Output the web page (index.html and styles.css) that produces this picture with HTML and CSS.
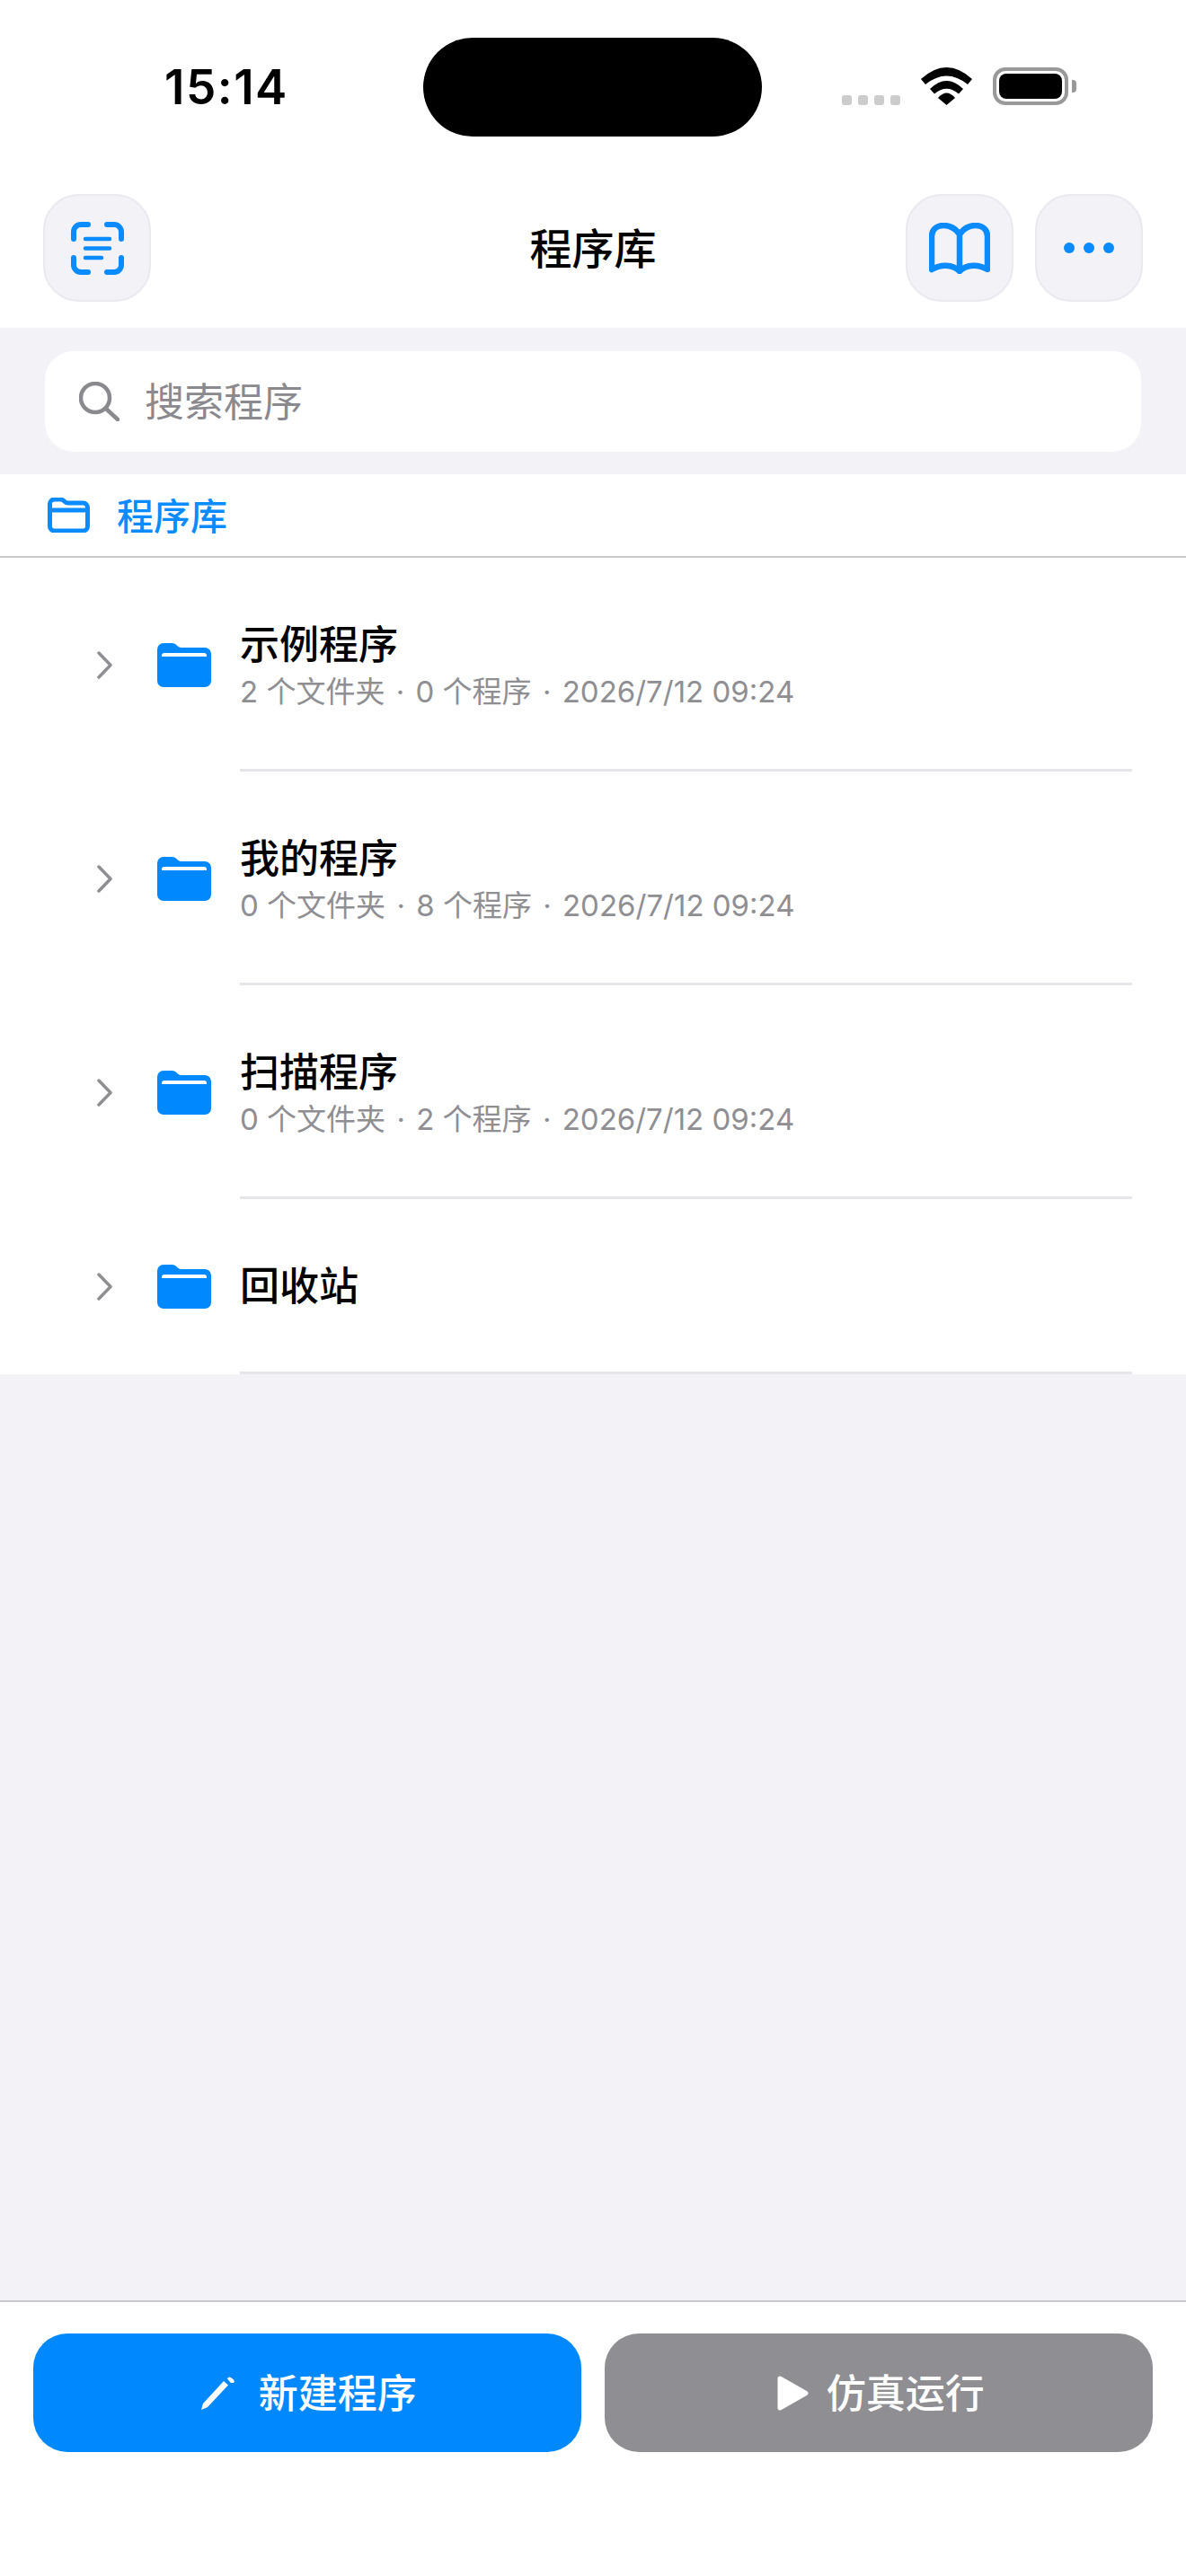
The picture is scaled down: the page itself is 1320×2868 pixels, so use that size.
FILE: index.html
```html
<!DOCTYPE html>
<html lang="zh-CN">
<head>
    <meta charset="UTF-8">
    <meta name="viewport" content="width=device-width, initial-scale=1.0">
    <title>程序库</title>
    <link rel="stylesheet" href="styles.css">
</head>
<body>
    <div class="status">
        <div class="status-left"><span class="time">15:14</span></div>
        <div class="island"></div>
        <div class="status-right">
            <div class="signal"><i></i><i></i><i></i><i></i></div>
            <svg class="wifi" viewBox="0 0 57 42"><path d="M0 13Q28.5-13 57 13L52 19Q28.5 0 5 19Z"/><path d="M10 24Q28.5 6 47 24L42 29.5Q28.5 18 15 29.5Z"/><path d="M19 34Q28.5 23 38 34L28.5 42Z"/></svg>
            <div class="battery"><div class="battery-fill"></div></div>
            <div class="battery-cap"></div>
        </div>
    </div>

    <div class="header">
        <div class="icon-btn">
            <svg class="scan" viewBox="0 0 59 59"><path d="M3 19V11a8 8 0 0 1 8-8h8M40 3h8a8 8 0 0 1 8 8v8M56 40v8a8 8 0 0 1-8 8h-8M19 56h-8a8 8 0 0 1-8-8v-8"/><path class="thin" d="M16 19H43M16 29.500H43M16 40H34"/></svg>
        </div>
        <div class="title">程序库</div>
        <div class="header-right">
            <div class="icon-btn">
                <svg class="book" viewBox="0 0 68 57"><path d="M3 52V15C3 8 8 3 16 3C24 3 30 7 34 13C38 7 44 3 52 3C60 3 65 8 65 15V52C55 46 42 46 34 54C26 46 13 46 3 52ZM34 13V54"/></svg>
            </div>
            <div class="icon-btn">
                <div class="dots"><i></i><i></i><i></i></div>
            </div>
        </div>
    </div>

    <div class="search-band">
        <div class="search">
            <svg class="search-icon" viewBox="0 0 45 44"><circle cx="18" cy="18" r="16"/><path d="M30 30L43 42"/></svg>
            <span>搜索程序</span>
        </div>
    </div>

    <div class="crumb">
        <svg class="crumb-folder" viewBox="0 0 47 39"><path d="M2.500 7a5 5 0 0 1 5-5h7c4 0 4 4 8 4h17a5 5 0 0 1 5 5v21a5 5 0 0 1-5 5H7.500a5 5 0 0 1-5-5Z"/><path d="M2.500 14H44.500"/></svg>
        <span>程序库</span>
    </div>

    <div class="list">
        <div class="row">
            <svg class="chevron" viewBox="0 0 17 31"><path d="M2 2L15 15.500L2 29"/></svg>
            <svg class="folder" viewBox="0 0 60 49"><path d="M0 7a7 7 0 0 1 7-7h9c6 0 6 5 11 5h26a7 7 0 0 1 7 7v30a7 7 0 0 1-7 7H7a7 7 0 0 1-7-7Z"/><path class="bar" d="M5 14a3 3 0 0 1 3-3h44a3 3 0 0 1 3 3v1H5Z"/></svg>
            <div class="row-body">
                <div class="name">示例程序</div>
                <div class="meta">2 个文件夹 <span class="sep">·</span> 0 个程序 <span class="sep">·</span> 2026/7/12 09:24</div>
            </div>
        </div>
        <div class="row">
            <svg class="chevron" viewBox="0 0 17 31"><path d="M2 2L15 15.500L2 29"/></svg>
            <svg class="folder" viewBox="0 0 60 49"><path d="M0 7a7 7 0 0 1 7-7h9c6 0 6 5 11 5h26a7 7 0 0 1 7 7v30a7 7 0 0 1-7 7H7a7 7 0 0 1-7-7Z"/><path class="bar" d="M5 14a3 3 0 0 1 3-3h44a3 3 0 0 1 3 3v1H5Z"/></svg>
            <div class="row-body">
                <div class="name">我的程序</div>
                <div class="meta">0 个文件夹 <span class="sep">·</span> 8 个程序 <span class="sep">·</span> 2026/7/12 09:24</div>
            </div>
        </div>
        <div class="row">
            <svg class="chevron" viewBox="0 0 17 31"><path d="M2 2L15 15.500L2 29"/></svg>
            <svg class="folder" viewBox="0 0 60 49"><path d="M0 7a7 7 0 0 1 7-7h9c6 0 6 5 11 5h26a7 7 0 0 1 7 7v30a7 7 0 0 1-7 7H7a7 7 0 0 1-7-7Z"/><path class="bar" d="M5 14a3 3 0 0 1 3-3h44a3 3 0 0 1 3 3v1H5Z"/></svg>
            <div class="row-body">
                <div class="name">扫描程序</div>
                <div class="meta">0 个文件夹 <span class="sep">·</span> 2 个程序 <span class="sep">·</span> 2026/7/12 09:24</div>
            </div>
        </div>
        <div class="row row-short">
            <svg class="chevron" viewBox="0 0 17 31"><path d="M2 2L15 15.500L2 29"/></svg>
            <svg class="folder" viewBox="0 0 60 49"><path d="M0 7a7 7 0 0 1 7-7h9c6 0 6 5 11 5h26a7 7 0 0 1 7 7v30a7 7 0 0 1-7 7H7a7 7 0 0 1-7-7Z"/><path class="bar" d="M5 14a3 3 0 0 1 3-3h44a3 3 0 0 1 3 3v1H5Z"/></svg>
            <div class="row-body">
                <div class="name">回收站</div>
            </div>
        </div>
    </div>

    <div class="spacer"></div>

    <div class="footer">
        <div class="action action-blue">
            <svg class="pencil" viewBox="0 0 38 38"><path d="M0 38L2 31L25 6L30 10.500L7 35Z"/><path d="M29 3.500a3 3 0 0 1 4-1.500l3 2.500a3 3 0 0 1 0 3.500L33 8Z"/></svg>
            <span>新建程序</span>
        </div>
        <div class="action action-gray">
            <svg class="play" viewBox="0 0 35 39"><path d="M3 3L32 19.500L3 36Z"/></svg>
            <span>仿真运行</span>
        </div>
    </div>
</body>
</html>
```

FILE: styles.css
```css
* {
    box-sizing: border-box;
}
body {
    margin: 0;
    height: 2868px;
    overflow: hidden;
    display: flex;
    flex-direction: column;
    background-color: #f2f2f7;
    font-family: "Noto Sans CJK SC", "Inter", sans-serif;
    color: #000;
}

/* status bar */
.status {
    height: 192px;
    background-color: #fff;
    display: flex;
    padding-top: 42px;
}
.status-left {
    width: 471px;
    padding-left: 183px;
    height: 110px;
    display: flex;
    align-items: center;
}
.time {
    font-family: "Inter", sans-serif;
    font-size: 53px;
    font-weight: 600;
    letter-spacing: 1.500px;
}
.island {
    width: 377px;
    height: 110px;
    background-color: #000;
    border-radius: 55px;
}
.status-right {
    display: flex;
    align-items: flex-end;
    height: 75px;
    padding-left: 89px;
}
.signal {
    display: flex;
    gap: 7px;
    margin-right: 23px;
}
.signal i {
    width: 11px;
    height: 11px;
    border-radius: 3px;
    background-color: #ccc;
}
.wifi {
    width: 57px;
    height: 42px;
    margin-right: 23px;
}
.battery {
    width: 84px;
    height: 42px;
    border: 4px solid #999;
    border-radius: 14px;
    padding: 3px;
}
.battery-fill {
    height: 100%;
    background-color: #000;
    border-radius: 8px;
}
.battery-cap {
    width: 5px;
    height: 14px;
    margin: 0 0 14px 4px;
    background-color: #999;
    border-radius: 0 4px 4px 0;
}

/* header */
.header {
    height: 173px;
    background-color: #fff;
    padding: 24px 48px 0;
    display: flex;
    justify-content: space-between;
    align-items: flex-start;
    position: relative;
}
.title {
    position: absolute;
    left: 0;
    right: 0;
    top: 50px;
    text-align: center;
    font-size: 47px;
    line-height: 64px;
    font-weight: 500;
}
.header-right {
    display: flex;
    gap: 24px;
}
.icon-btn {
    width: 120px;
    height: 120px;
    border-radius: 40px;
    background-color: #f2f2f7;
    border: 2px solid #e9e9ef;
    display: flex;
    align-items: center;
    justify-content: center;
}
.scan {
    width: 59px;
    height: 59px;
    fill: none;
    stroke: #0a8bff;
    stroke-width: 6;
    stroke-linecap: round;
}
.scan .thin {
    stroke-width: 4.500;
}
.book {
    width: 68px;
    height: 57px;
    fill: none;
    stroke: #0a8bff;
    stroke-width: 6.500;
    stroke-linejoin: round;
    stroke-linecap: round;
}
.dots {
    display: flex;
    gap: 10px;
}
.dots i {
    width: 12px;
    height: 12px;
    border-radius: 50%;
    background-color: #0a8bff;
}

/* search */
.search-band {
    height: 163px;
    padding: 26px 50px 25px;
}
.search {
    height: 112px;
    border-radius: 32px;
    background-color: #fff;
    display: flex;
    align-items: center;
    padding-left: 38px;
    gap: 28px;
    font-size: 44px;
    color: #8a8a8e;
}
.search span {
    padding-bottom: 4px;
}
.search-icon {
    width: 45px;
    height: 44px;
    fill: none;
    stroke: #8a8a8e;
    stroke-width: 4.500;
    stroke-linecap: round;
}

/* breadcrumb */
.crumb {
    height: 93px;
    background-color: #fff;
    border-bottom: 2px solid #c9c9cd;
    display: flex;
    align-items: center;
    padding: 0 0 4px 53px;
    gap: 30px;
    font-size: 41px;
    font-weight: 500;
    color: #0a8bff;
}
.crumb-folder {
    width: 47px;
    height: 39px;
    margin-top: 4px;
    fill: none;
    stroke: #0a8bff;
    stroke-width: 5;
    stroke-linejoin: round;
}

/* list */
.list {
    background-color: #fff;
}
.row {
    height: 238px;
    display: flex;
    align-items: center;
    padding: 0 60px 0 108px;
}
.row-short {
    height: 195px;
}
.chevron {
    width: 17px;
    height: 31px;
    margin-right: 50px;
    fill: none;
    stroke: #8e8e93;
    stroke-width: 3.500;
    stroke-linecap: round;
    stroke-linejoin: round;
}
.folder {
    width: 60px;
    height: 49px;
    margin-right: 32px;
    fill: #0088ff;
}
.folder .bar {
    fill: #fff;
}
.row-body {
    flex: 1;
    align-self: stretch;
    display: flex;
    flex-direction: column;
    justify-content: center;
    border-bottom: 3px solid #e5e5ea;
}
.name {
    font-size: 44px;
    line-height: 58px;
    font-weight: 500;
    margin-bottom: 4px;
}
.meta {
    font-family: "Inter", "Noto Sans CJK SC", sans-serif;
    font-size: 33px;
    line-height: 44px;
    color: #8e8e93;
}
.sep {
    margin: 0 3px;
}

.spacer {
    flex: 1;
}

/* bottom actions */
.footer {
    height: 307px;
    background-color: #fff;
    border-top: 2px solid #c9c9cd;
    padding: 35px 37px 0;
    display: flex;
    gap: 26px;
}
.action {
    flex: 1;
    height: 132px;
    border-radius: 38px;
    display: flex;
    align-items: center;
    justify-content: center;
    color: #fff;
    font-size: 44px;
    font-weight: 500;
}
.action span {
    padding-bottom: 4px;
}
.action-blue {
    background-color: #0088ff;
    gap: 26px;
    padding-left: 4px;
}
.action-gray {
    background-color: #8e8e93;
    gap: 20px;
    padding-left: 5px;
}
.pencil {
    width: 38px;
    height: 38px;
    fill: #fff;
}
.play {
    width: 35px;
    height: 39px;
    fill: #fff;
    stroke: #fff;
    stroke-width: 5;
    stroke-linejoin: round;
}
```
